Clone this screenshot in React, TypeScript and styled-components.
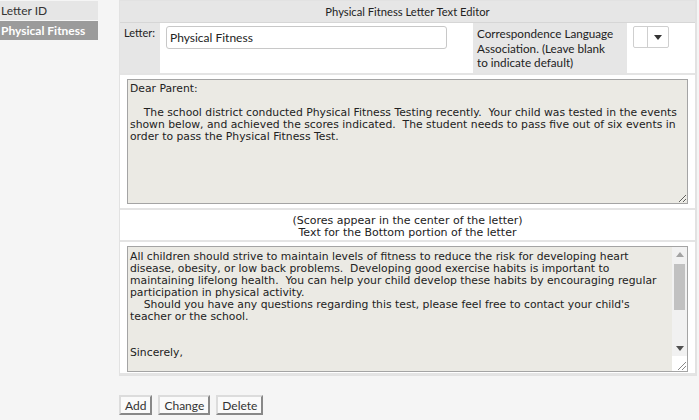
import React from "react";
import styled, { createGlobalStyle } from "styled-components";

const GlobalStyle = createGlobalStyle`
  html, body { margin: 0; padding: 0; }
  body {
    background: #f5f5f5;
    font-family: "Lato", "DejaVu Sans", sans-serif;
    color: #222;
  }
`;

const Page = styled.div`
  display: flex;
  align-items: flex-start;
  width: 699px;
  height: 420px;
  overflow: hidden;
`;

const Sidebar = styled.div`
  width: 98px;
  padding-top: 1px;
  display: flex;
  flex-direction: column;
  gap: 1px;
`;

const SideItem = styled.div<{ $active?: boolean }>`
  height: 19px;
  line-height: 19px;
  padding-left: 1px;
  font-size: 12px;
  white-space: nowrap;
  background: ${(p) => (p.$active ? "#9b9b9b" : "#e6e6e6")};
  color: ${(p) => (p.$active ? "#fff" : "#333")};
  font-weight: ${(p) => (p.$active ? 700 : 400)};
`;

const Main = styled.div`
  margin-left: 21px;
  width: 578px;
  display: flex;
  flex-direction: column;
`;

const Editor = styled.div`
  background: #fff;
  border: 1px solid #e2e2e2;
  border-right-width: 2px;
  display: flex;
  flex-direction: column;
`;

const TitleRow = styled.div`
  height: 21px;
  background: #e6e6e6;
  border-bottom: 1px solid #d6d6d6;
  display: flex;
  align-items: center;
  justify-content: center;
  font-size: 11.2px;
`;

const FieldRow = styled.div`
  display: grid;
  grid-template-columns: 40px 313px 154px 1fr;
  height: 50px;
  border-bottom: 2px solid #e4e4e4;
`;

const LabelCell = styled.div<{ $size?: number }>`
  background: #e6e6e6;
  padding: 3px 4px 0 4px;
  font-size: ${(p) => p.$size ?? 11}px;
  line-height: 14.5px;
  white-space: nowrap;
`;

const InputCell = styled.div`
  padding: 3px 0 0 6px;
`;

const TextInput = styled.input`
  box-sizing: border-box;
  width: 281px;
  height: 23px;
  border: 1px solid #c8c8c8;
  border-radius: 3px;
  padding: 0 3px;
  font-family: inherit;
  font-size: 12px;
  color: #222;
  outline: none;
`;

const SelectBox = styled.div`
  box-sizing: border-box;
  width: 36px;
  height: 22px;
  border: 1px solid #cfcfcf;
  border-radius: 2px;
  display: grid;
  grid-template-columns: 14px 1fr;
  background: #fff;
`;

const SelectValue = styled.div`
  border-right: 1px solid #cfcfcf;
`;

const SelectArrow = styled.div`
  display: flex;
  align-items: center;
  justify-content: center;
`;

const Triangle = styled.span<{ $dir: "up" | "down"; $color: string; $w?: number }>`
  width: 0;
  height: 0;
  border-left: ${(p) => (p.$w ?? 8) / 2}px solid transparent;
  border-right: ${(p) => (p.$w ?? 8) / 2}px solid transparent;
  ${(p) =>
    p.$dir === "down"
      ? `border-top: ${Math.round((p.$w ?? 8) * 0.6)}px solid ${p.$color};`
      : `border-bottom: ${Math.round((p.$w ?? 8) * 0.6)}px solid ${p.$color};`}
`;

const AreaRow = styled.div<{ $height: number }>`
  height: ${(p) => p.$height}px;
  padding: 4px 7px 0 7px;
  border-bottom: 2px solid #e4e4e4;
  box-sizing: border-box;
`;

const AreaWrap = styled.div`
  position: relative;
`;

const LetterArea = styled.textarea<{ $height: number; $scroll?: boolean }>`
  box-sizing: border-box;
  width: 100%;
  height: ${(p) => p.$height}px;
  margin: 0;
  display: block;
  background: #ebeae4;
  border: 1px solid #a4a4a4;
  padding: ${(p) => (p.$scroll ? "4px 17px 2px 2px" : "3px 2px 2px 2px")};
  font-family: "DejaVu Sans", sans-serif;
  font-size: 10.8px;
  line-height: 12px;
  color: #222;
  white-space: pre-wrap;
  overflow: hidden;
  resize: ${(p) => (p.$scroll ? "none" : "both")};
  outline: none;
`;

const ScrollBar = styled.div`
  position: absolute;
  top: 1px;
  right: 1px;
  bottom: 1px;
  width: 15px;
  background: #f1f1f1;
  display: flex;
  flex-direction: column;
`;

const ScrollArrow = styled.div`
  height: 15px;
  display: flex;
  align-items: center;
  justify-content: center;
`;

const ScrollTrack = styled.div`
  flex: 1;
  padding: 2px 2px;
`;

const ScrollThumb = styled.div`
  height: 46px;
  background: #c1c1c1;
`;

const ScrollCorner = styled.div`
  height: 15px;
  background: #fff;
  display: flex;
  align-items: flex-end;
  justify-content: flex-end;
`;

const NoteRow = styled.div`
  height: 32px;
  padding-top: 4px;
  border-bottom: 2px solid #e4e4e4;
  display: flex;
  flex-direction: column;
  align-items: center;
  justify-content: center;
  font-family: "DejaVu Sans", sans-serif;
  font-size: 11px;
  line-height: 12px;
  box-sizing: border-box;
`;

const ButtonBar = styled.div`
  display: flex;
  gap: 6px;
  margin-top: 19px;
`;

const Button = styled.button`
  height: 20px;
  padding: 0 4px;
  background: #fafafa;
  border: 2px outset #dcdcdc;
  font-family: inherit;
  font-size: 12px;
  color: #333;
`;

const topText = `Dear Parent:

    The school district conducted Physical Fitness Testing recently.  Your child was tested in the events
shown below, and achieved the scores indicated.  The student needs to pass five out of six events in
order to pass the Physical Fitness Test.`;

const bottomText = `All children should strive to maintain levels of fitness to reduce the risk for developing heart
disease, obesity, or low back problems.  Developing good exercise habits is important to
maintaining lifelong health.  You can help your child develop these habits by encouraging regular
participation in physical activity.
    Should you have any questions regarding this test, please feel free to contact your child's
teacher or the school.


Sincerely,




Physical Education Department
`;

export default function App() {
  return (
    <>
      <GlobalStyle />
      <Page>
        <Sidebar>
          <SideItem>Letter ID</SideItem>
          <SideItem $active>Physical Fitness</SideItem>
        </Sidebar>
        <Main>
          <Editor>
            <TitleRow>Physical Fitness Letter Text Editor</TitleRow>
            <FieldRow>
              <LabelCell>Letter:</LabelCell>
              <InputCell>
                <TextInput defaultValue="Physical Fitness" />
              </InputCell>
              <LabelCell $size={11.7}>
                Correspondence Language
                <br />
                Association. (Leave blank
                <br />
                to indicate default)
              </LabelCell>
              <InputCell>
                <SelectBox>
                  <SelectValue />
                  <SelectArrow>
                    <Triangle $dir="down" $color="#333" $w={9} />
                  </SelectArrow>
                </SelectBox>
              </InputCell>
            </FieldRow>
            <AreaRow $height={135}>
              <LetterArea $height={125} defaultValue={topText} />
            </AreaRow>
            <NoteRow>
              <div>(Scores appear in the center of the letter)</div>
              <div>Text for the Bottom portion of the letter</div>
            </NoteRow>
            <AreaRow $height={133}>
              <AreaWrap>
                <LetterArea $height={126} $scroll defaultValue={bottomText} />
                <ScrollBar>
                  <ScrollArrow>
                    <Triangle $dir="up" $color="#a3a3a3" $w={8} />
                  </ScrollArrow>
                  <ScrollTrack>
                    <ScrollThumb />
                  </ScrollTrack>
                  <ScrollArrow>
                    <Triangle $dir="down" $color="#505050" $w={8} />
                  </ScrollArrow>
                  <ScrollCorner>
                    <svg width="12" height="12" viewBox="0 0 12 12">
                      <line x1="11" y1="3" x2="3" y2="11" stroke="#888" strokeWidth="1" />
                      <line x1="11" y1="7" x2="7" y2="11" stroke="#888" strokeWidth="1" />
                    </svg>
                  </ScrollCorner>
                </ScrollBar>
              </AreaWrap>
            </AreaRow>
          </Editor>
          <ButtonBar>
            <Button>Add</Button>
            <Button>Change</Button>
            <Button>Delete</Button>
          </ButtonBar>
        </Main>
      </Page>
    </>
  );
}
